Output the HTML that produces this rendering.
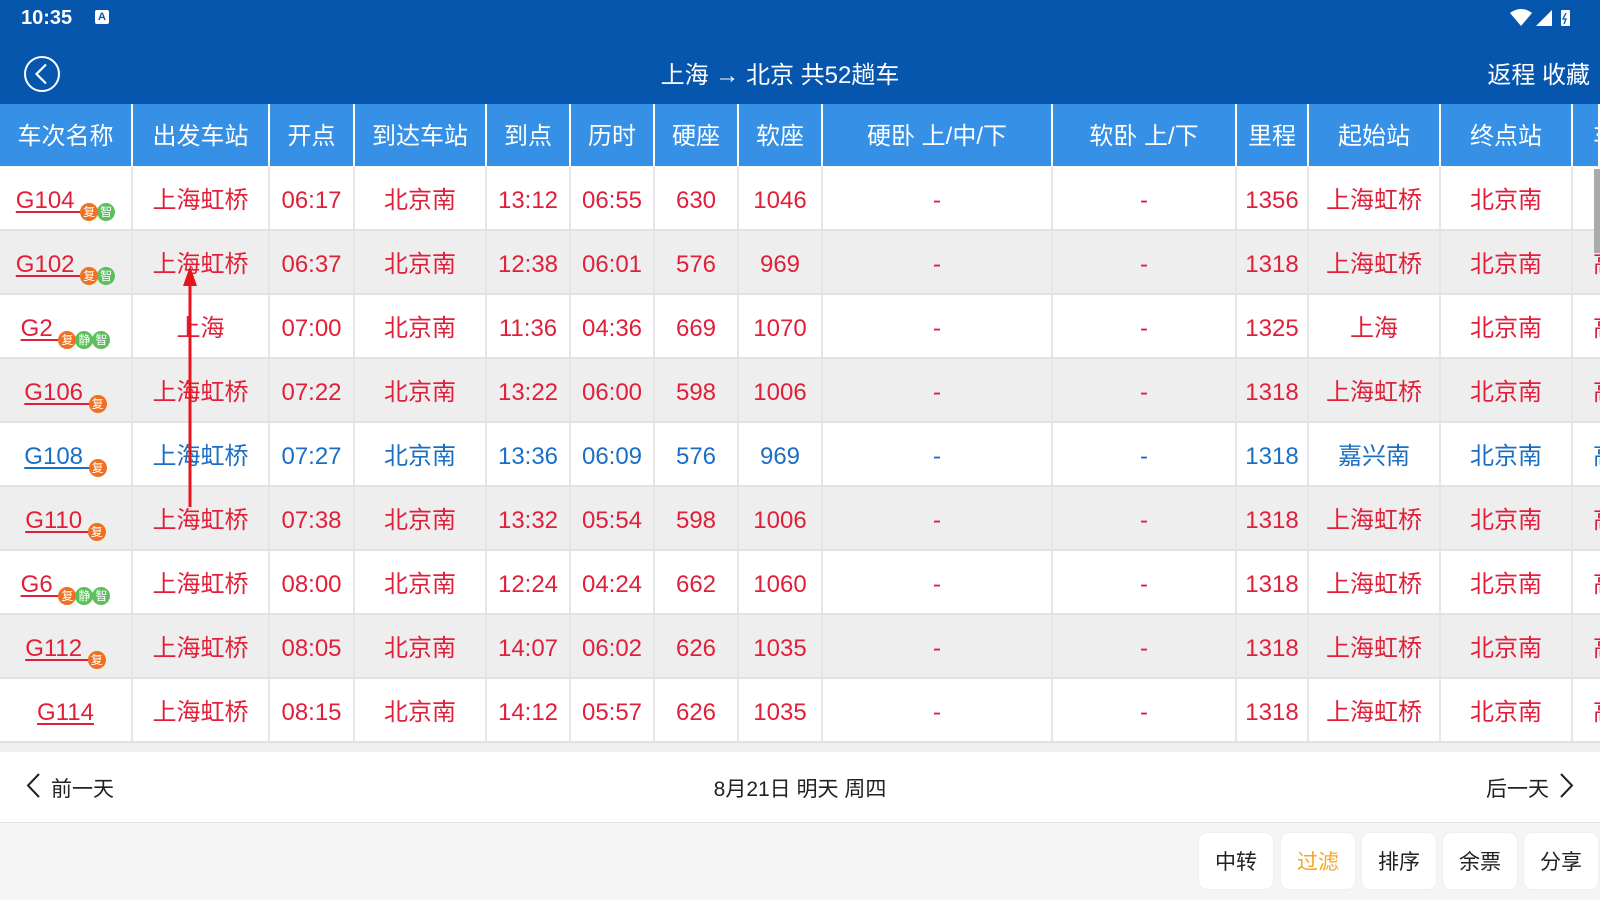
<!DOCTYPE html>
<html><head><meta charset="utf-8"><style>
*{margin:0;padding:0;box-sizing:border-box}
body{width:1600px;height:900px;overflow:hidden;background:#f5f5f5;font-family:"Liberation Sans","Noto Sans CJK SC",sans-serif;position:relative}
.top{position:absolute;left:0;top:0;width:1600px;height:104px;background:#0756ad;color:#fff}
.hdr{position:absolute;top:104px;left:0;height:62px;width:1600px;background:#3590e6;display:flex;color:#fff;font-size:24px}
.row{position:absolute;left:0;width:1600px;height:64px;display:flex;color:#e0203a;font-size:24px;border-bottom:2px solid #e2e2e2}
.c{border-right:2px solid #e6e6e6;display:block;text-align:center;flex:none;white-space:nowrap;overflow:hidden;line-height:68px;height:62px}
.hdr .c{border-right:2px solid #fff;line-height:66px;height:62px}
.w0{width:133px}.w1{width:137px}.w2{width:85px}.w3{width:132px}.w4{width:84px}.w5{width:84px}.w6{width:84px}.w7{width:84px}.w8{width:230px}.w9{width:184px}.w10{width:72px}.w11{width:132px}.w12{width:132px}.w13{width:27px;border-right:none;text-align:left;padding-left:20px}
.g{text-decoration:underline;text-underline-offset:3px}
.b{display:inline-block;width:18px;height:18px;border-radius:50%;color:#fff;font-size:12px;line-height:18px;text-align:center;vertical-align:-8px;margin-left:-1px}
.o{background:#f07020}.gr{background:#5cbf5c}
.btn{position:absolute;top:833px;width:74px;height:56px;background:#fff;border-radius:8px;font-size:21px;color:#222;display:flex;align-items:center;justify-content:center;box-shadow:0 0 2px #e4e4e4}
</style></head><body>
<div class="top">
<div style="position:absolute;left:21px;top:7px;font-size:20px;font-weight:bold">10:35</div>
<div style="position:absolute;left:95px;top:10px;width:14px;height:14px;background:#fff;border-radius:2px;color:#0756ad;font-size:11px;font-weight:bold;text-align:center;line-height:14px">A</div>
<svg style="position:absolute;left:1508px;top:8px" width="80" height="20"><path d="M2 5 Q13 -3 24 5 L13 18 Z" fill="#fff"/><path d="M28 18 L44 2 L44 18 Z" fill="#fff"/><rect x="53" y="2" width="9" height="16" rx="1" fill="#fff"/><path d="M58 5 L55 11 L58 11 L56 16" stroke="#0756ad" stroke-width="1.3" fill="none"/></svg>
<svg style="position:absolute;left:23px;top:55px" width="38" height="38"><circle cx="19" cy="19" r="17" stroke="#fff" stroke-width="2" fill="none"/><path d="M23 9.5 L13.5 19 L23 28.5" stroke="#fff" stroke-width="2.2" fill="none"/></svg>
<div style="position:absolute;left:580px;width:400px;text-align:center;top:55px;font-size:24px">上海 → 北京 共52趟车</div>
<div style="position:absolute;right:10px;top:55px;font-size:24px">返程 收藏</div>
</div>
<div class="hdr"><div class="c w0">车次名称</div><div class="c w1">出发车站</div><div class="c w2">开点</div><div class="c w3">到达车站</div><div class="c w4">到点</div><div class="c w5">历时</div><div class="c w6">硬座</div><div class="c w7">软座</div><div class="c w8">硬卧 上/中/下</div><div class="c w9">软卧 上/下</div><div class="c w10">里程</div><div class="c w11">起始站</div><div class="c w12">终点站</div><div class="c w13">车</div></div>

<div class="row" style="top:167px;background:#fff"><div class="c w0"><span class="g">G104 </span><span class="b o">复</span><span class="b gr">智</span></div><div class="c w1">上海虹桥</div><div class="c w2">06:17</div><div class="c w3">北京南</div><div class="c w4">13:12</div><div class="c w5">06:55</div><div class="c w6">630</div><div class="c w7">1046</div><div class="c w8">-</div><div class="c w9">-</div><div class="c w10">1356</div><div class="c w11">上海虹桥</div><div class="c w12">北京南</div><div class="c w13">高</div></div>
<div class="row" style="top:231px;background:#eee"><div class="c w0"><span class="g">G102 </span><span class="b o">复</span><span class="b gr">智</span></div><div class="c w1">上海虹桥</div><div class="c w2">06:37</div><div class="c w3">北京南</div><div class="c w4">12:38</div><div class="c w5">06:01</div><div class="c w6">576</div><div class="c w7">969</div><div class="c w8">-</div><div class="c w9">-</div><div class="c w10">1318</div><div class="c w11">上海虹桥</div><div class="c w12">北京南</div><div class="c w13">高</div></div>
<div class="row" style="top:295px;background:#fff"><div class="c w0"><span class="g">G2 </span><span class="b o">复</span><span class="b gr">静</span><span class="b gr">智</span></div><div class="c w1">上海</div><div class="c w2">07:00</div><div class="c w3">北京南</div><div class="c w4">11:36</div><div class="c w5">04:36</div><div class="c w6">669</div><div class="c w7">1070</div><div class="c w8">-</div><div class="c w9">-</div><div class="c w10">1325</div><div class="c w11">上海</div><div class="c w12">北京南</div><div class="c w13">高</div></div>
<div class="row" style="top:359px;background:#eee"><div class="c w0"><span class="g">G106 </span><span class="b o">复</span></div><div class="c w1">上海虹桥</div><div class="c w2">07:22</div><div class="c w3">北京南</div><div class="c w4">13:22</div><div class="c w5">06:00</div><div class="c w6">598</div><div class="c w7">1006</div><div class="c w8">-</div><div class="c w9">-</div><div class="c w10">1318</div><div class="c w11">上海虹桥</div><div class="c w12">北京南</div><div class="c w13">高</div></div>
<div class="row" style="top:423px;background:#fff;color:#1a6fc4"><div class="c w0"><span class="g">G108 </span><span class="b o">复</span></div><div class="c w1">上海虹桥</div><div class="c w2">07:27</div><div class="c w3">北京南</div><div class="c w4">13:36</div><div class="c w5">06:09</div><div class="c w6">576</div><div class="c w7">969</div><div class="c w8">-</div><div class="c w9">-</div><div class="c w10">1318</div><div class="c w11">嘉兴南</div><div class="c w12">北京南</div><div class="c w13">高</div></div>
<div class="row" style="top:487px;background:#eee"><div class="c w0"><span class="g">G110 </span><span class="b o">复</span></div><div class="c w1">上海虹桥</div><div class="c w2">07:38</div><div class="c w3">北京南</div><div class="c w4">13:32</div><div class="c w5">05:54</div><div class="c w6">598</div><div class="c w7">1006</div><div class="c w8">-</div><div class="c w9">-</div><div class="c w10">1318</div><div class="c w11">上海虹桥</div><div class="c w12">北京南</div><div class="c w13">高</div></div>
<div class="row" style="top:551px;background:#fff"><div class="c w0"><span class="g">G6 </span><span class="b o">复</span><span class="b gr">静</span><span class="b gr">智</span></div><div class="c w1">上海虹桥</div><div class="c w2">08:00</div><div class="c w3">北京南</div><div class="c w4">12:24</div><div class="c w5">04:24</div><div class="c w6">662</div><div class="c w7">1060</div><div class="c w8">-</div><div class="c w9">-</div><div class="c w10">1318</div><div class="c w11">上海虹桥</div><div class="c w12">北京南</div><div class="c w13">高</div></div>
<div class="row" style="top:615px;background:#eee"><div class="c w0"><span class="g">G112 </span><span class="b o">复</span></div><div class="c w1">上海虹桥</div><div class="c w2">08:05</div><div class="c w3">北京南</div><div class="c w4">14:07</div><div class="c w5">06:02</div><div class="c w6">626</div><div class="c w7">1035</div><div class="c w8">-</div><div class="c w9">-</div><div class="c w10">1318</div><div class="c w11">上海虹桥</div><div class="c w12">北京南</div><div class="c w13">高</div></div>
<div class="row" style="top:679px;background:#fff"><div class="c w0"><span class="g">G114</span></div><div class="c w1">上海虹桥</div><div class="c w2">08:15</div><div class="c w3">北京南</div><div class="c w4">14:12</div><div class="c w5">05:57</div><div class="c w6">626</div><div class="c w7">1035</div><div class="c w8">-</div><div class="c w9">-</div><div class="c w10">1318</div><div class="c w11">上海虹桥</div><div class="c w12">北京南</div><div class="c w13">高</div></div>
<div style="position:absolute;top:743px;left:0;width:1600px;height:9px;background:#f0f0f0"></div>
<div style="position:absolute;left:1594px;top:169px;width:6px;height:84px;background:#aaa"></div>

<svg style="position:absolute;left:0;top:0" width="400" height="520"><line x1="190" y1="507" x2="190" y2="282" stroke="#e8141c" stroke-width="3"/><path d="M183 286 L190 266 L197 286 Z" fill="#e8141c"/></svg>

<div style="position:absolute;top:752px;left:0;width:1600px;height:71px;background:#fff;border-bottom:1px solid #e0e0e0;font-size:21px;color:#222">
<svg style="position:absolute;left:24px;top:20px" width="18" height="27"><path d="M15 2 L4 13.5 L15 25" stroke="#222" stroke-width="2" fill="none"/></svg>
<div style="position:absolute;left:51px;top:21px">前一天</div>
<div style="position:absolute;left:600px;width:400px;text-align:center;top:21px">8月21日 明天 周四</div>
<div style="position:absolute;left:1486px;top:21px">后一天</div>
<svg style="position:absolute;left:1558px;top:20px" width="18" height="27"><path d="M3 2 L14 13.5 L3 25" stroke="#222" stroke-width="2" fill="none"/></svg>
</div>
<div class="btn" style="left:1199px">中转</div>
<div class="btn" style="left:1281px;color:#f5a623">过滤</div>
<div class="btn" style="left:1362px">排序</div>
<div class="btn" style="left:1443px">余票</div>
<div class="btn" style="left:1524px">分享</div>
</body></html>
